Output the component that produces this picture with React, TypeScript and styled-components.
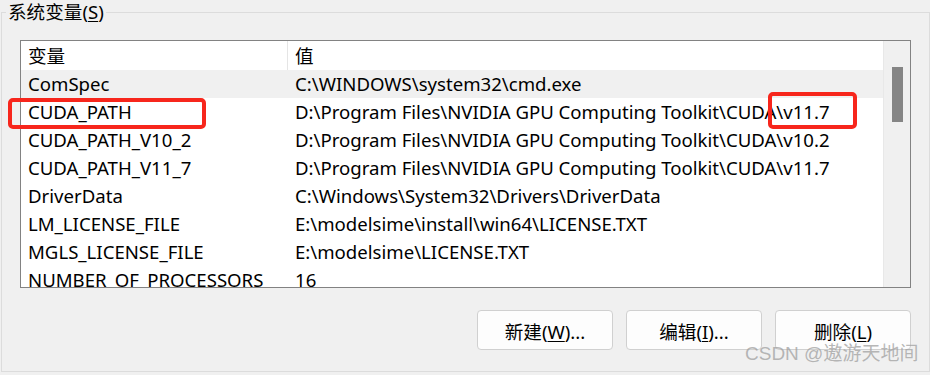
import React from "react";
import styled, { createGlobalStyle } from "styled-components";

const GlobalStyle = createGlobalStyle`
  html, body { margin: 0; padding: 0; background: #f0f0f0; }
  body {
    font-family: "Noto Sans", "Noto Sans CJK SC", sans-serif;
    color: #000;
    width: 930px;
    height: 375px;
    overflow: hidden;
  }
`;

const Page = styled.div`
  position: relative;
  width: 930px;
  height: 375px;
`;

const Group = styled.fieldset`
  box-sizing: border-box;
  margin: 0 0 0 1px;
  padding: 0 18px 0 18px;
  width: 928px;
  height: 372px;
  border: 1px solid #dcdcdc;
  display: flex;
  flex-direction: column;
`;

const Legend = styled.legend`
  margin-left: -14px;
  padding: 0 2px;
  font-size: 18.6px;
  line-height: 24px;
  color: #000;
`;

const Key = styled.span`
  text-decoration: underline;
  text-underline-offset: 2px;
`;

const ListBox = styled.div`
  box-sizing: border-box;
  margin-top: 16px;
  width: 891px;
  height: 248px;
  border: 1px solid #828282;
  background: #fff;
  display: flex;
  overflow: hidden;
`;

const ListContent = styled.div`
  width: 862px;
  display: flex;
  flex-direction: column;
  border-right: 1px solid #e8e8e8;
`;

const Row = styled.div<{ $selected?: boolean; $header?: boolean }>`
  display: grid;
  grid-template-columns: 266px 1fr;
  flex: none;
  height: ${(p) => (p.$header ? "29px" : "28px")};
  background: ${(p) => (p.$selected ? "#f0f0f0" : "#fff")};
  font-size: 18.6px;
  line-height: 28px;
  white-space: nowrap;
`;

const Cell = styled.div<{ $divider?: boolean; $value?: boolean }>`
  padding-left: ${(p) => (p.$value ? "8px" : "7px")};
  border-left: ${(p) => (p.$divider ? "1px solid #e5e5e5" : "none")};
  overflow: hidden;
  display: flex;
  align-items: center;
`;

const ScrollTrack = styled.div`
  width: 26px;
  background: #f0f0f0;
  display: flex;
  justify-content: center;
  padding-top: 26px;
  box-sizing: border-box;
`;

const Thumb = styled.div`
  width: 11px;
  height: 55px;
  background: #858585;
`;

const ButtonRow = styled.div`
  display: flex;
  justify-content: flex-end;
  gap: 13px;
  margin-top: 22px;
  width: 891px;
`;

const Button = styled.button`
  box-sizing: border-box;
  width: 136px;
  height: 40px;
  background: #fdfdfd;
  border: 1px solid #d0d0d0;
  border-radius: 4px;
  font-family: "Noto Sans", "Noto Sans CJK SC", sans-serif;
  font-size: 18.6px;
  color: #000;
  padding: 0;
`;

const Mark = styled.div<{ $l: number; $t: number; $w: number; $h: number }>`
  position: absolute;
  left: ${(p) => p.$l}px;
  top: ${(p) => p.$t}px;
  width: ${(p) => p.$w}px;
  height: ${(p) => p.$h}px;
  box-sizing: border-box;
  border: 4px solid #f7261c;
  border-radius: 5px;
  pointer-events: none;
`;

const Watermark = styled.div`
  position: absolute;
  left: 745px;
  top: 342px;
  font-family: "Liberation Sans", "Noto Sans CJK SC", sans-serif;
  font-size: 19px;
  line-height: 24px;
  color: rgba(160, 160, 160, 0.75);
  white-space: nowrap;
`;

const rows: [string, string][] = [
  ["ComSpec", "C:\\WINDOWS\\system32\\cmd.exe"],
  ["CUDA_PATH", "D:\\Program Files\\NVIDIA GPU Computing Toolkit\\CUDA\\v11.7"],
  ["CUDA_PATH_V10_2", "D:\\Program Files\\NVIDIA GPU Computing Toolkit\\CUDA\\v10.2"],
  ["CUDA_PATH_V11_7", "D:\\Program Files\\NVIDIA GPU Computing Toolkit\\CUDA\\v11.7"],
  ["DriverData", "C:\\Windows\\System32\\Drivers\\DriverData"],
  ["LM_LICENSE_FILE", "E:\\modelsime\\install\\win64\\LICENSE.TXT"],
  ["MGLS_LICENSE_FILE", "E:\\modelsime\\LICENSE.TXT"],
  ["NUMBER_OF_PROCESSORS", "16"],
];

export default function App() {
  return (
    <Page>
      <GlobalStyle />
      <Group>
        <Legend>
          系统变量(<Key>S</Key>)
        </Legend>
        <ListBox>
          <ListContent>
            <Row $header>
              <Cell>变量</Cell>
              <Cell $divider>值</Cell>
            </Row>
            {rows.map(([k, v], i) => (
              <Row key={k} $selected={i === 0}>
                <Cell>{k}</Cell>
                <Cell $value>{v}</Cell>
              </Row>
            ))}
          </ListContent>
          <ScrollTrack>
            <Thumb />
          </ScrollTrack>
        </ListBox>
        <ButtonRow>
          <Button>
            新建(<Key>W</Key>)...
          </Button>
          <Button>
            编辑(<Key>I</Key>)...
          </Button>
          <Button>
            删除(<Key>L</Key>)
          </Button>
        </ButtonRow>
      </Group>
      <Mark $l={8} $t={98} $w={198} $h={31} />
      <Mark $l={768} $t={92} $w={89} $h={37} />
      <Watermark>CSDN @遨游天地间</Watermark>
    </Page>
  );
}
